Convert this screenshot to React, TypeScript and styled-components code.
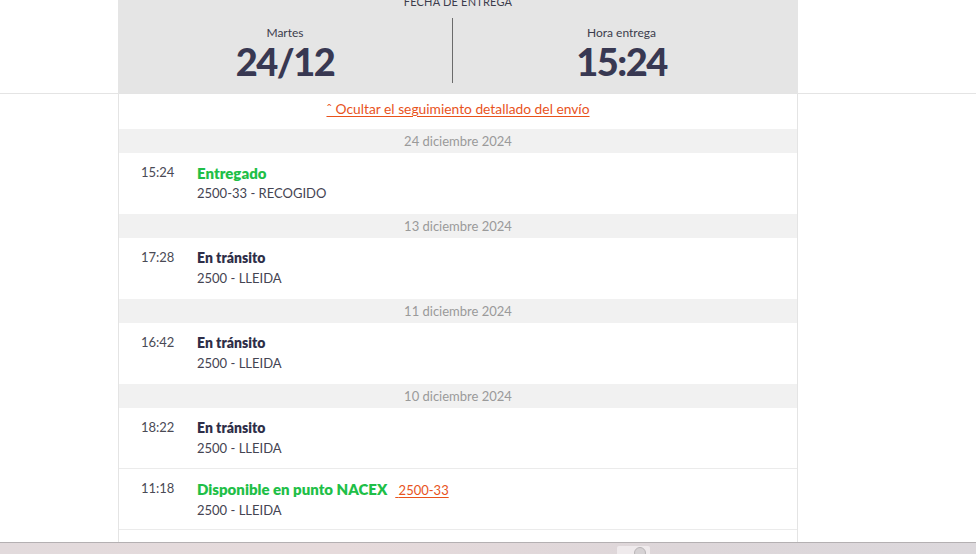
import React from "react";
import styled, { createGlobalStyle } from "styled-components";

const Global = createGlobalStyle`
  html, body { margin: 0; padding: 0; background: #fff; }
  body { font-family: Lato, "Open Sans", sans-serif; }
`;

const Page = styled.div`
  width: 976px;
  height: 554px;
  display: flex;
  flex-direction: column;
  overflow: hidden;
`;

const Main = styled.div`
  flex: 1;
  overflow: hidden;
  display: flex;
  flex-direction: column;
`;

const TopBand = styled.div`
  border-bottom: 1px solid #e4e4e4;
  padding-left: 118px;
`;

const Header = styled.div`
  width: 680px;
  height: 93px;
  background: #e5e5e5;
  overflow: hidden;
  display: flex;
  flex-direction: column;
`;

const HeaderLabel = styled.div`
  text-align: center;
  font-size: 11px;
  color: #3c3c4c;
  letter-spacing: 0.2px;
  line-height: 12px;
  margin-top: -4px;
  height: 12px;
`;

const Halves = styled.div`
  display: grid;
  grid-template-columns: 334px 1px 1fr;
  margin-top: 10px;
  height: 65px;
`;

const Half = styled.div<{ $padRight?: number }>`
  display: flex;
  flex-direction: column;
  align-items: center;
  padding-right: ${(p) => p.$padRight ?? 0}px;
  padding-top: 9px;
`;

const Divider = styled.div`
  background: #6b6b6b;
`;

const SmallCaption = styled.div`
  font-size: 12px;
  color: #3c3c4c;
  line-height: 12px;
`;

const BigValue = styled.div`
  font-size: 38px;
  font-weight: 900;
  color: #383852;
  line-height: 44px;
  letter-spacing: -1.5px;
`;

const Column = styled.div`
  margin-left: 118px;
  width: 678px;
  flex: 1;
  border-left: 1px solid #e4e4e4;
  border-right: 1px solid #e4e4e4;
  display: flex;
  flex-direction: column;
`;

const ToggleRow = styled.div`
  height: 35px;
  display: flex;
  justify-content: center;
  padding-top: 5px;
  box-sizing: border-box;
`;

const OrangeLink = styled.a`
  color: #e8531c;
  text-decoration: underline;
  text-underline-offset: 2px;
  font-size: 13.8px;
  line-height: 20px;
  cursor: pointer;
`;

const DateBand = styled.div`
  height: 24px;
  background: #f1f1f1;
  display: flex;
  align-items: center;
  justify-content: center;
  font-size: 13px;
  color: #9a9a9a;
`;

const EventRow = styled.div<{ $line?: boolean }>`
  height: 61px;
  display: grid;
  grid-template-columns: 56px 1fr;
  padding-left: 22px;
  padding-top: 10px;
  box-sizing: border-box;
  border-bottom: ${(p) => (p.$line ? "1px solid #ebebeb" : "none")};
`;

const Time = styled.div`
  font-size: 13px;
  color: #4a4a55;
  line-height: 18px;
`;

const Info = styled.div`
  display: flex;
  flex-direction: column;
`;

const Title = styled.div<{ $green?: boolean }>`
  font-size: ${(p) => (p.$green ? 15 : 14)}px;
  font-weight: 800;
  color: ${(p) => (p.$green ? "#1fbf48" : "#2e2e48")};
  line-height: 20px;
  display: flex;
  gap: 8px;
  align-items: baseline;
`;

const TitleLink = styled(OrangeLink)`
  font-weight: 400;
  font-size: 13px;
`;

const Place = styled.div`
  font-size: 13px;
  color: #444452;
  line-height: 20px;
`;

const Taskbar = styled.div`
  height: 11px;
  border-top: 1px solid #b4b0b2;
  background: linear-gradient(90deg, #e2dadc 0%, #e6dadb 35%, #ddd6d9 70%, #dcd8dc 100%);
  display: flex;
  padding-left: 617px;
`;

const TaskButton = styled.div`
  width: 33px;
  height: 8px;
  margin-top: 3px;
  background: #efeaec;
  border-radius: 2px 2px 0 0;
  display: flex;
  justify-content: flex-end;
  padding-right: 4px;
  box-sizing: border-box;
`;

const TaskIcon = styled.div`
  width: 10px;
  height: 10px;
  border-radius: 50%;
  border: 1px solid #b9b5b7;
  background: #d6d2d4;
  margin-top: 1px;
`;

type Ev = {
  time: string;
  title: string;
  green?: boolean;
  place: string;
  link?: string;
};

const groups: { date: string; events: Ev[] }[] = [
  {
    date: "24 diciembre 2024",
    events: [{ time: "15:24", title: "Entregado", green: true, place: "2500-33 - RECOGIDO" }],
  },
  {
    date: "13 diciembre 2024",
    events: [{ time: "17:28", title: "En tránsito", place: "2500 - LLEIDA" }],
  },
  {
    date: "11 diciembre 2024",
    events: [{ time: "16:42", title: "En tránsito", place: "2500 - LLEIDA" }],
  },
  {
    date: "10 diciembre 2024",
    events: [
      { time: "18:22", title: "En tránsito", place: "2500 - LLEIDA" },
      {
        time: "11:18",
        title: "Disponible en punto NACEX",
        green: true,
        place: "2500 - LLEIDA",
        link: "2500-33",
      },
    ],
  },
];

export default function App() {
  return (
    <>
      <Global />
      <Page>
        <Main>
          <TopBand>
            <Header>
              <HeaderLabel>FECHA DE ENTREGA</HeaderLabel>
              <Halves>
                <Half>
                  <SmallCaption>Martes</SmallCaption>
                  <BigValue>24/12</BigValue>
                </Half>
                <Divider />
                <Half $padRight={8}>
                  <SmallCaption>Hora entrega</SmallCaption>
                  <BigValue>15:24</BigValue>
                </Half>
              </Halves>
            </Header>
          </TopBand>
          <Column>
            <ToggleRow>
              <OrangeLink>ˆ Ocultar el seguimiento detallado del envío</OrangeLink>
            </ToggleRow>
            {groups.map((g) => (
              <React.Fragment key={g.date}>
                <DateBand>{g.date}</DateBand>
                {g.events.map((e) => (
                  <EventRow key={e.time} $line={g.events.length > 1}>
                    <Time>{e.time}</Time>
                    <Info>
                      <Title $green={e.green}>
                        {e.title}
                        {e.link && <TitleLink>&nbsp;{e.link}</TitleLink>}
                      </Title>
                      <Place>{e.place}</Place>
                    </Info>
                  </EventRow>
                ))}
              </React.Fragment>
            ))}
          </Column>
        </Main>
        <Taskbar>
          <TaskButton>
            <TaskIcon />
          </TaskButton>
        </Taskbar>
      </Page>
    </>
  );
}
